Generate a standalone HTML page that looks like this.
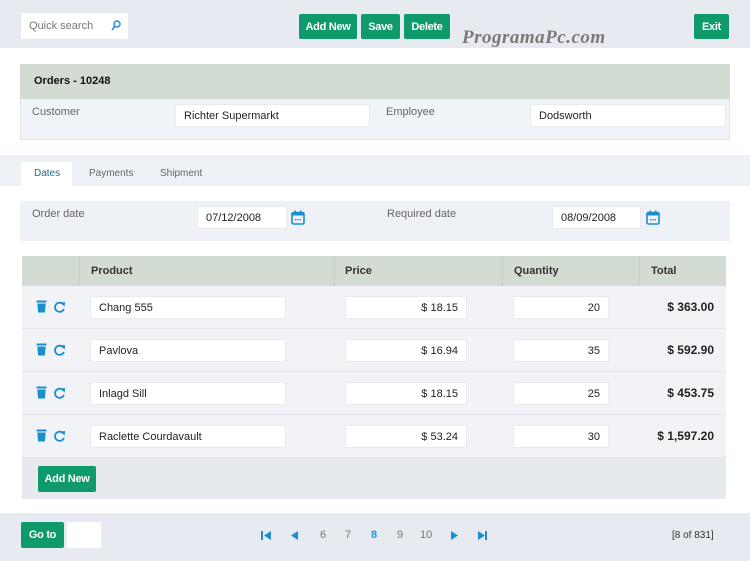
<!DOCTYPE html>
<html><head><style>
*{box-sizing:border-box;margin:0;padding:0}
body{width:750px;height:561px;background:#fff;font-family:"Liberation Sans",sans-serif;font-size:11px;color:#222;position:relative;overflow:hidden}
.a{position:absolute}
.btn{position:absolute;background:#0e9a6b;color:#fff;font-weight:bold;font-size:11px;display:flex;align-items:center;justify-content:center;border-radius:2px;letter-spacing:-0.3px}
.inp{position:absolute;background:#fff;border:1px solid #e8eaee;display:flex;align-items:center;padding:0 8px;font-size:11px;color:#222}
.lbl{position:absolute;color:#666;font-size:11px}
.hd{position:absolute;font-weight:bold;font-size:11px;color:#333}
.tot{position:absolute;font-weight:bold;font-size:12px;color:#222;left:630px;width:84px;text-align:right}
.row{position:absolute;left:22px;width:704px;height:43px;background:#f1f3f7;border-bottom:1px solid #e2e5ea}
.num{position:absolute;font-size:11px;color:#777}
.ic{position:absolute}
</style></head><body>
<div class="a" style="left:0;top:0;width:750px;height:48px;background:#e7eaf0"></div>
<div class="inp" style="left:21px;top:13px;width:107px;height:26px;color:#777;border:none">Quick search</div>
<svg class="ic" style="left:111px;top:20px" width="10" height="11" viewBox="0 0 10 11"><circle cx="6" cy="4" r="3" fill="none" stroke="#1a8fd0" stroke-width="1.4"/><line x1="4" y1="6" x2="1" y2="10" stroke="#1a8fd0" stroke-width="1.5"/></svg>
<div class="btn" style="left:299px;top:14px;width:58px;height:25px">Add New</div>
<div class="btn" style="left:361px;top:14px;width:39px;height:25px">Save</div>
<div class="btn" style="left:404px;top:14px;width:46px;height:25px">Delete</div>
<div class="btn" style="left:694px;top:14px;width:35px;height:25px">Exit</div>
<div class="a" style="left:462px;top:27px;font-family:'Liberation Serif',serif;font-style:italic;font-weight:bold;font-size:19px;color:#7a7a7a;letter-spacing:0.5px">ProgramaPc.com</div>

<div class="a" style="left:20px;top:64px;width:710px;height:76px;background:#f0f3f7;border:1px solid #e0e3e7"></div>
<div class="a" style="left:20px;top:64px;width:710px;height:35px;background:#d2dcd3"></div>
<div class="hd" style="left:34px;top:75px;color:#111">Orders - 10248</div>
<div class="lbl" style="left:32px;top:106px">Customer</div>
<div class="inp" style="left:175px;top:104px;width:195px;height:23px">Richter Supermarkt</div>
<div class="lbl" style="left:386px;top:106px">Employee</div>
<div class="inp" style="left:530px;top:104px;width:196px;height:23px">Dodsworth</div>

<div class="a" style="left:0;top:155px;width:750px;height:31px;background:#eef1f5"></div>
<div class="a" style="left:21px;top:162px;width:51px;height:24px;background:#fff"></div>
<div class="a" style="left:34px;top:168px;font-size:10px;color:#1d6e8c">Dates</div>
<div class="a" style="left:89px;top:168px;font-size:10px;color:#666">Payments</div>
<div class="a" style="left:160px;top:168px;font-size:10px;color:#666">Shipment</div>

<div class="a" style="left:20px;top:201px;width:710px;height:40px;background:#eef1f5"></div>
<div class="lbl" style="left:32px;top:208px">Order date</div>
<div class="inp" style="left:197px;top:206px;width:90px;height:23px">07/12/2008</div>
<div class="lbl" style="left:387px;top:208px">Required date</div>
<div class="inp" style="left:552px;top:206px;width:89px;height:23px">08/09/2008</div>
<svg class="ic" style="left:291px;top:210px" width="14" height="15" viewBox="0 0 14 15"><rect x="1" y="2.5" width="12" height="11.5" rx="1.5" fill="none" stroke="#1a8fd0" stroke-width="1.6"/><rect x="1" y="2.5" width="12" height="3" fill="#1a8fd0"/><rect x="3.5" y="0.5" width="1.5" height="3" fill="#1a8fd0"/><rect x="9" y="0.5" width="1.5" height="3" fill="#1a8fd0"/><rect x="4" y="9" width="1.4" height="1.4" fill="#1a8fd0"/><rect x="6.3" y="9" width="1.4" height="1.4" fill="#1a8fd0"/><rect x="8.6" y="9" width="1.4" height="1.4" fill="#1a8fd0"/></svg>
<svg class="ic" style="left:646px;top:210px" width="14" height="15" viewBox="0 0 14 15"><rect x="1" y="2.5" width="12" height="11.5" rx="1.5" fill="none" stroke="#1a8fd0" stroke-width="1.6"/><rect x="1" y="2.5" width="12" height="3" fill="#1a8fd0"/><rect x="3.5" y="0.5" width="1.5" height="3" fill="#1a8fd0"/><rect x="9" y="0.5" width="1.5" height="3" fill="#1a8fd0"/><rect x="4" y="9" width="1.4" height="1.4" fill="#1a8fd0"/><rect x="6.3" y="9" width="1.4" height="1.4" fill="#1a8fd0"/><rect x="8.6" y="9" width="1.4" height="1.4" fill="#1a8fd0"/></svg>

<div class="a" style="left:22px;top:256px;width:704px;height:30px;background:#d2dcd3"></div>
<div class="a" style="left:79px;top:256px;width:1px;height:30px;background:#c5cfc6"></div>
<div class="a" style="left:334px;top:256px;width:1px;height:30px;background:#c5cfc6"></div>
<div class="a" style="left:502px;top:256px;width:1px;height:30px;background:#c5cfc6"></div>
<div class="a" style="left:639px;top:256px;width:1px;height:30px;background:#c5cfc6"></div>
<div class="hd" style="left:91px;top:265px">Product</div>
<div class="hd" style="left:345px;top:265px">Price</div>
<div class="hd" style="left:514px;top:265px">Quantity</div>
<div class="hd" style="left:651px;top:265px">Total</div>

<div class="row" style="top:286px"></div>
<div class="row" style="top:329px"></div>
<div class="row" style="top:372px"></div>
<div class="row" style="top:415px"></div>

<svg class="ic" style="left:36px;top:300px" width="32" height="142" viewBox="0 0 32 142">
<g id="g"><rect x="0.5" y="0.5" width="10" height="2" rx="0.5" fill="#1a8fd0"/><path d="M1.3 3.5h8.4l-0.8 9h-6.8z" fill="#1a8fd0"/><path d="M27.3 4.5a4.6 4.6 0 1 0 0.6 4.5" fill="none" stroke="#1a8fd0" stroke-width="1.8"/><path d="M24.5 2.5l4.5-0.5-0.3 4.6z" fill="#1a8fd0"/></g>
<use href="#g" y="43"/><use href="#g" y="86"/><use href="#g" y="129"/>
</svg>
<div class="inp" style="left:90px;top:296px;width:196px;height:23px">Chang 555</div>
<div class="inp" style="left:345px;top:296px;width:122px;height:23px;justify-content:flex-end">$ 18.15</div>
<div class="inp" style="left:513px;top:296px;width:96px;height:23px;justify-content:flex-end">20</div>
<div class="tot" style="top:300px">$ 363.00</div>

<div class="inp" style="left:90px;top:339px;width:196px;height:23px">Pavlova</div>
<div class="inp" style="left:345px;top:339px;width:122px;height:23px;justify-content:flex-end">$ 16.94</div>
<div class="inp" style="left:513px;top:339px;width:96px;height:23px;justify-content:flex-end">35</div>
<div class="tot" style="top:343px">$ 592.90</div>

<div class="inp" style="left:90px;top:382px;width:196px;height:23px">Inlagd Sill</div>
<div class="inp" style="left:345px;top:382px;width:122px;height:23px;justify-content:flex-end">$ 18.15</div>
<div class="inp" style="left:513px;top:382px;width:96px;height:23px;justify-content:flex-end">25</div>
<div class="tot" style="top:386px">$ 453.75</div>

<div class="inp" style="left:90px;top:425px;width:196px;height:23px">Raclette Courdavault</div>
<div class="inp" style="left:345px;top:425px;width:122px;height:23px;justify-content:flex-end">$ 53.24</div>
<div class="inp" style="left:513px;top:425px;width:96px;height:23px;justify-content:flex-end">30</div>
<div class="tot" style="top:429px">$ 1,597.20</div>

<div class="a" style="left:22px;top:458px;width:704px;height:41px;background:#e6e9ee"></div>
<div class="btn" style="left:38px;top:466px;width:58px;height:26px">Add New</div>

<div class="a" style="left:0;top:513px;width:750px;height:48px;background:#e7eaf0"></div>
<div class="btn" style="left:21px;top:522px;width:43px;height:26px">Go to</div>
<div class="a" style="left:67px;top:522px;width:34px;height:26px;background:#fff"></div>
<svg class="ic" style="left:261px;top:530px" width="230" height="11" viewBox="0 0 230 11">
<rect x="0" y="1" width="2" height="9" fill="#1a8fd0"/><path d="M10 1v9l-7-4.5z" fill="#1a8fd0"/>
<path d="M37 1v9l-7-4.5z" fill="#1a8fd0"/>
<path d="M190 1v9l7-4.5z" fill="#1a8fd0"/>
<path d="M217 1v9l7-4.5z" fill="#1a8fd0"/><rect x="224" y="1" width="2" height="9" fill="#1a8fd0"/>
</svg>
<div class="num" style="left:320px;top:529px">6</div>
<div class="num" style="left:345px;top:529px">7</div>
<div class="num" style="left:371px;top:529px;color:#1a9ad6;font-weight:bold">8</div>
<div class="num" style="left:397px;top:529px">9</div>
<div class="num" style="left:420px;top:529px">10</div>
<div class="a" style="left:672px;top:530px;font-size:10px;color:#333">[8 of 831]</div>
</body></html>
